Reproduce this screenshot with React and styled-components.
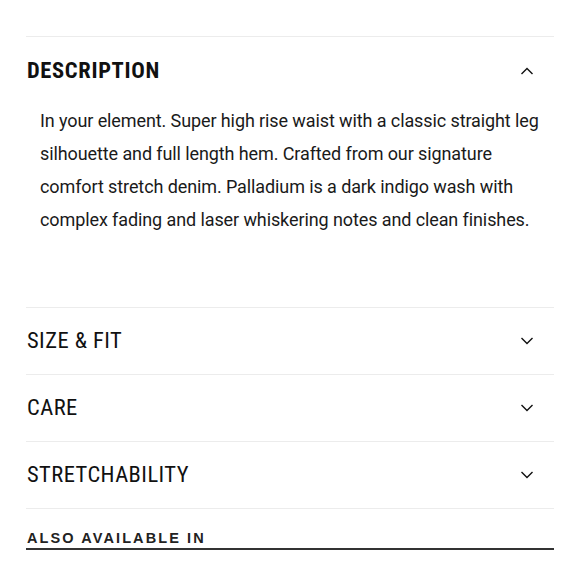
import React from "react";
import styled, { createGlobalStyle } from "styled-components";

const Global = createGlobalStyle`
  html, body { margin: 0; padding: 0; background: #fff; }
  body { font-family: Roboto, "Liberation Sans", Arial, sans-serif; color: #111; }
`;

const Page = styled.div`
  padding: 36px 26px 0 26px;
  width: 580px;
  box-sizing: border-box;
`;

const Section = styled.section`
  border-top: 1px solid #ececec;
`;

const Header = styled.div`
  display: flex;
  align-items: center;
  justify-content: space-between;
  height: ${(p) => p.$h}px;
  padding: 0 20px 0 1px;
`;

const Title = styled.h2`
  margin: -2px 0 0 0;
  font-size: 22.5px;
  font-stretch: condensed;
  font-weight: ${(p) => (p.$bold ? 700 : 400)};
  letter-spacing: ${(p) => (p.$bold ? "0.65px" : "0.45px")};
  color: #111;
`;

const Body = styled.p`
  margin: 0;
  padding: 0 10px 71px 14px;
  font-size: 18px;
  line-height: 33px;
  color: #1a1a1a;
  letter-spacing: -0.1px;
`;

const Also = styled.div`
  padding: 20px 0 1px 1px;
  font-family: "Liberation Sans", Arial, sans-serif;
  font-weight: 700;
  font-size: 14.5px;
  letter-spacing: 2.1px;
  color: #222;
  line-height: 18px;
  border-bottom: 2px solid #333;
`;

const Chevron = ({ up }) => (
  <svg width="14" height="8" viewBox="0 0 14 8" fill="none">
    <path
      d={up ? "M1.5 7 L7 1.5 L12.5 7" : "M1.5 1 L7 6.5 L12.5 1"}
      stroke="#111"
      strokeWidth="1.4"
    />
  </svg>
);

const rows = ["SIZE & FIT", "CARE", "STRETCHABILITY"];

export default function App() {
  return (
    <>
      <Global />
      <Page>
        <Section>
          <Header $h={67}>
            <Title $bold>DESCRIPTION</Title>
            <Chevron up />
          </Header>
          <Body>
            In your element. Super high rise waist with a classic straight leg
            silhouette and full length hem. Crafted from our signature
            comfort stretch denim. Palladium is a dark indigo wash with
            complex fading and laser whiskering notes and clean finishes.
          </Body>
        </Section>
        {rows.map((r) => (
          <Section key={r}>
            <Header $h={66}>
              <Title>{r}</Title>
              <Chevron />
            </Header>
          </Section>
        ))}
        <Section>
          <Also>ALSO AVAILABLE IN</Also>
        </Section>
      </Page>
    </>
  );
}
